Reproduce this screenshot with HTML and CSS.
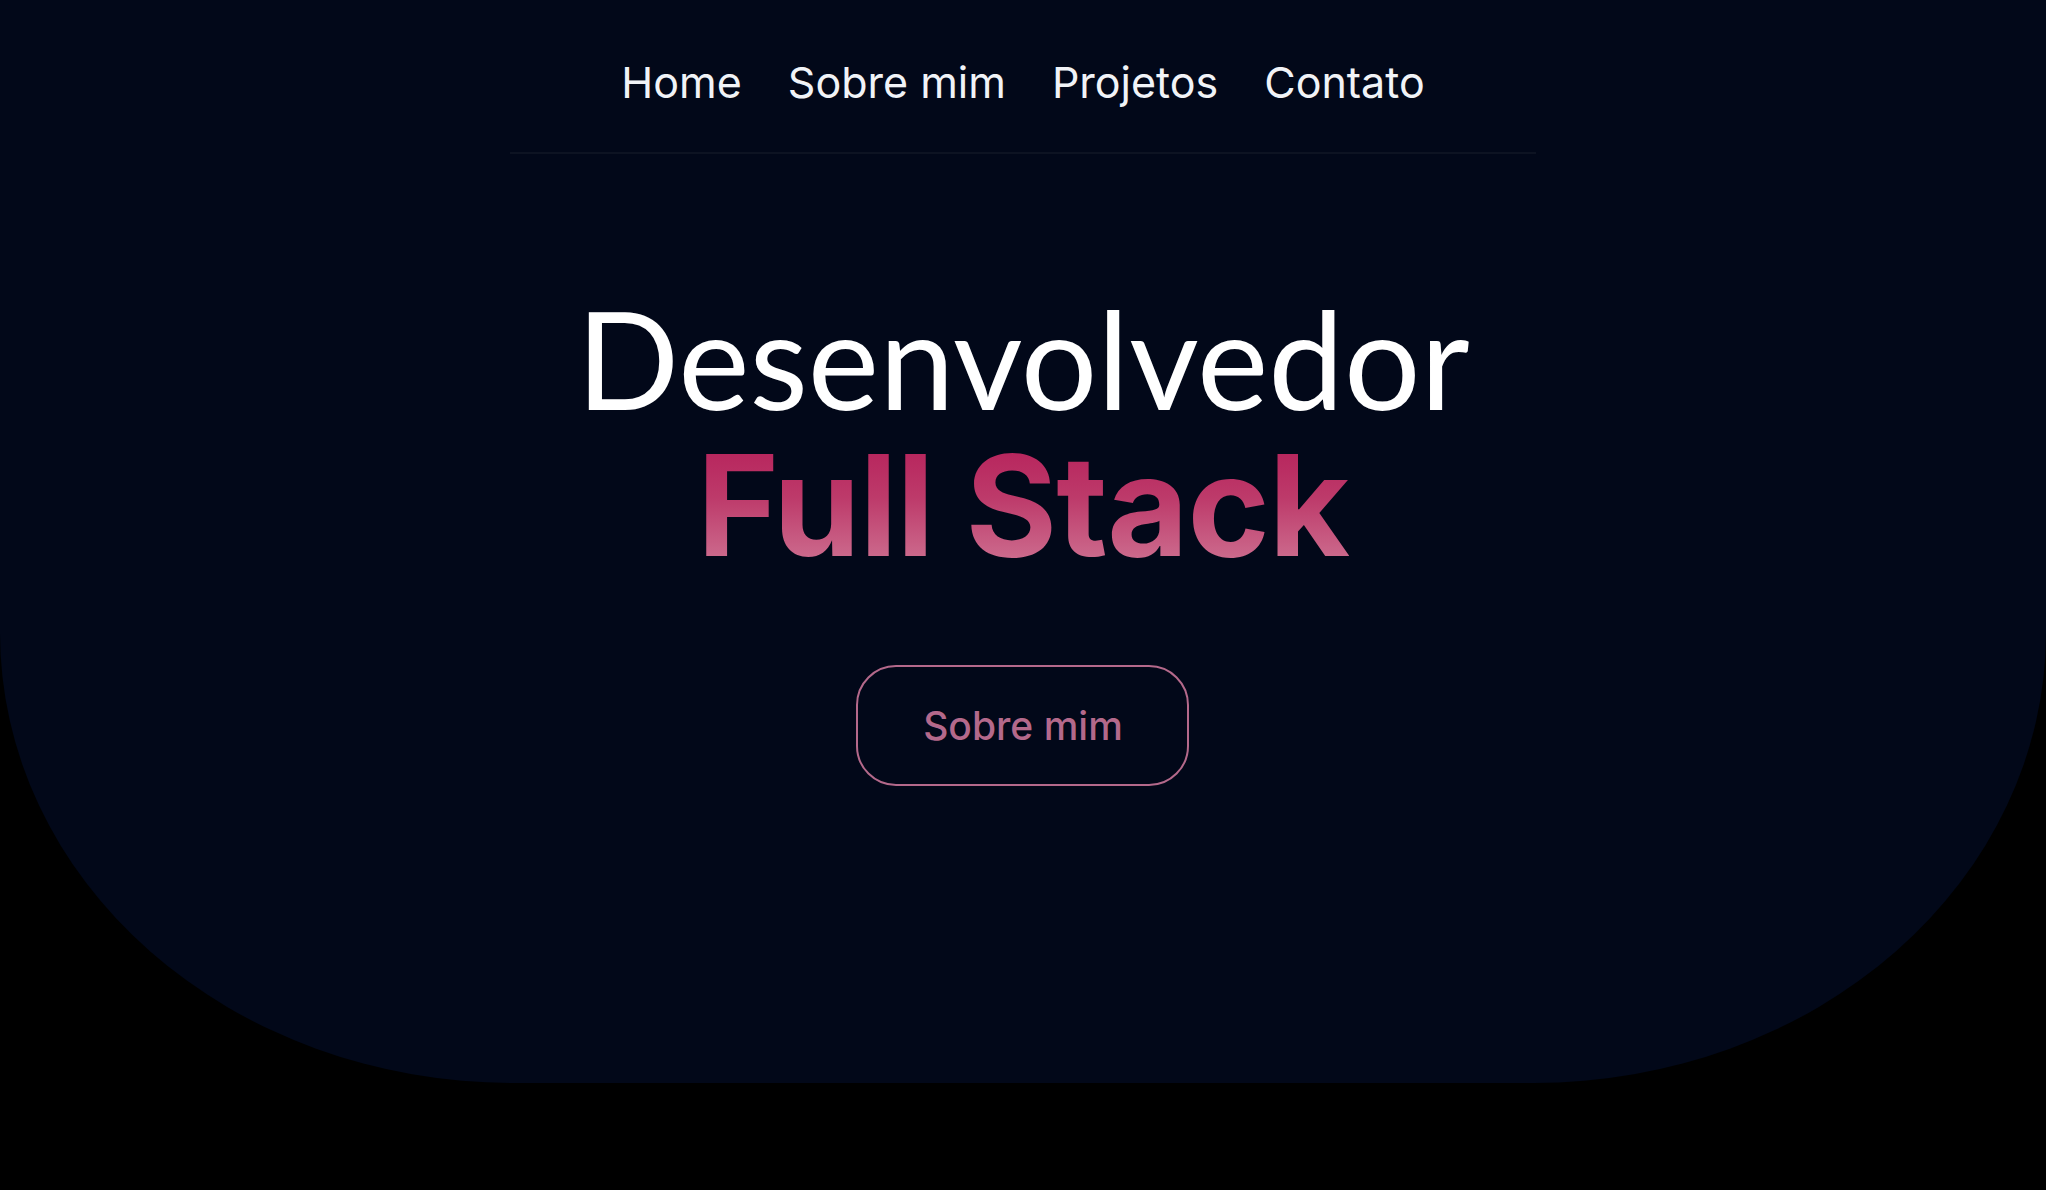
FILE: index.html
```html
<!DOCTYPE html>
<html lang="pt-BR">
<head>
<meta charset="utf-8">
<title>Desenvolvedor Full Stack</title>
<link rel="stylesheet" href="styles.css">
</head>
<body>
<section class="hero">
  <header class="header">
    <nav class="nav">
      <a class="nav-link" href="#">Home</a>
      <a class="nav-link" href="#">Sobre mim</a>
      <a class="nav-link" href="#">Projetos</a>
      <a class="nav-link" href="#">Contato</a>
    </nav>
    <div class="divider"></div>
  </header>
  <div class="hero-body">
    <h1 class="title">
      <span class="title-top">Desenvolvedor</span>
      <span class="title-bottom">Full Stack</span>
    </h1>
    <a class="cta" href="#">Sobre mim</a>
  </div>
</section>
</body>
</html>
```
FILE: styles.css
```css
html, body {
  margin: 0;
  padding: 0;
  background: #000;
}
body {
  font-family: Inter, "Liberation Sans", sans-serif;
  height: 1190px;
  overflow: hidden;
}
.hero {
  background: #020819;
  height: 1083px;
  border-bottom-left-radius: 512px 450px;
  border-bottom-right-radius: 512px 450px;
  display: flex;
  flex-direction: column;
  align-items: center;
}
.header {
  width: 1026px;
  display: flex;
  flex-direction: column;
  align-items: center;
}
.nav {
  display: flex;
  gap: 46px;
  padding-top: 57px;
  height: 96px;
  box-sizing: border-box;
}
.nav-link {
  color: #f1f3f7;
  text-decoration: none;
  font-size: 43px;
  line-height: 50px;
  font-weight: 400;
}
.divider {
  width: 100%;
  height: 2px;
  margin-top: 56px;
  background: #0d1322;
}
.hero-body {
  display: flex;
  flex-direction: column;
  align-items: center;
}
.title {
  margin: 131px 0 0;
  display: flex;
  flex-direction: column;
  align-items: center;
  font-weight: 400;
}
.title-top {
  font-family: Lato, sans-serif;
  font-size: 135px;
  line-height: 146px;
  color: #fff;
  font-weight: 400;
}
.title-bottom {
  font-family: Inter, sans-serif;
  font-size: 140px;
  line-height: 148px;
  font-weight: 700;
  letter-spacing: -1px;
  background: linear-gradient(180deg, #b51d58 0%, #bd3a6a 45%, #d17a98 100%);
  -webkit-background-clip: text;
  background-clip: text;
  color: transparent;
}
.cta {
  margin-top: 86px;
  width: 333px;
  height: 121px;
  box-sizing: border-box;
  border: 2px solid #b4698b;
  border-radius: 40px;
  display: flex;
  align-items: center;
  justify-content: center;
  color: #b4698b;
  text-decoration: none;
  font-size: 39px;
  font-weight: 500;
}
```
